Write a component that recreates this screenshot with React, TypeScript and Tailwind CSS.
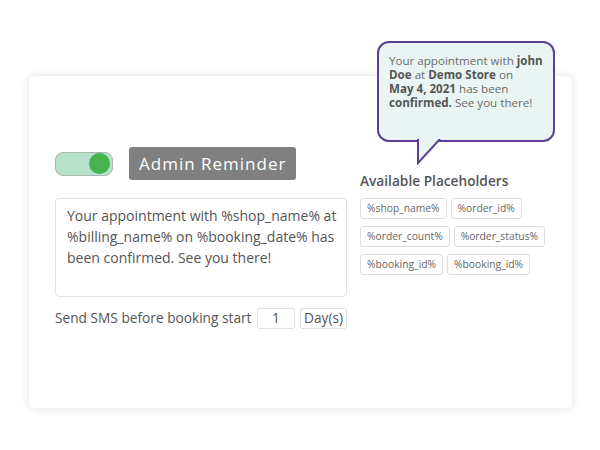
import React from 'react';

const chipRows = [
  ['%shop_name%', '%order_id%'],
  ['%order_count%', '%order_status%'],
  ['%booking_id%', '%booking_id%'],
];

function Toggle() {
  return (
    <div className="flex items-center justify-end w-[58px] h-[24px] rounded-[8px] border border-[#a9b5ae] bg-[#b7e3cc] pr-[2px]">
      <div className="w-[21px] h-[21px] rounded-full bg-[#46b350]" />
    </div>
  );
}

function Bubble() {
  return (
    <div className="absolute left-[348px] top-[-35px] w-[178px] h-[101px]">
      <div className="w-full h-full rounded-[12px] border-2 border-[#5c3f93] bg-[#eaf5f3] pl-[10px] pt-[11px] text-[11.6px] leading-[14px] text-[#6b6b6b] whitespace-nowrap">
        Your appointment with <b className="font-bold text-[#555]">john</b>
        <br />
        <b className="font-bold text-[#555]">Doe</b> at <b className="font-bold text-[#555]">Demo Store</b> on
        <br />
        <b className="font-bold text-[#555]">May 4, 2021</b> has been
        <br />
        <b className="font-bold text-[#555]">confirmed.</b> See you there!
      </div>
      <svg className="absolute left-[39px] top-[98px]" width="26" height="26" viewBox="0 0 26 26">
        <path d="M2 0 L2 24 L24 0" fill="#eaf5f3" stroke="#5c3f93" strokeWidth="2" strokeLinejoin="miter" />
      </svg>
    </div>
  );
}

export default function App() {
  return (
    <div className="w-[600px] h-[450px] bg-white" style={{ fontFamily: '"Open Sans", sans-serif' }}>
      <div className="pt-[76px] pl-[29px]">
        <div className="relative w-[543px] h-[332px] rounded-[5px] bg-white shadow-[0_0_10px_rgba(0,0,0,0.12)] pl-[26px] pt-[71px] flex gap-[13px]">
          <Bubble />
          <div className="w-[292px] flex flex-col">
            <div className="flex items-center gap-[16px] h-[33px]">
              <Toggle />
              <div className="h-[33px] px-[10px] flex items-center rounded-[3px] bg-[#808080] text-white text-[17px] tracking-[1px]">
                Admin Reminder
              </div>
            </div>
            <div className="mt-[18px] h-[99px] rounded-[4px] border border-[#e2e2e2] px-[11px] pt-[6px] text-[14px] leading-[21px] text-[#555] whitespace-nowrap">
              Your appointment with %shop_name% at
              <br />
              %billing_name% on %booking_date% has
              <br />
              been confirmed. See you there!
            </div>
            <div className="mt-[11px] flex items-center text-[13.7px] text-[#555]">
              <span className="w-[202px] whitespace-nowrap">Send SMS before booking start</span>
              <div className="w-[38px] h-[21px] rounded-[3px] border border-[#e0e0e0] flex items-center justify-center">1</div>
              <div className="ml-[5px] w-[47px] h-[21px] rounded-[3px] border border-[#e0e0e0] flex items-center justify-center">Day(s)</div>
            </div>
          </div>
          <div className="flex flex-col pt-[24px]">
            <div className="text-[13.7px] leading-[20px] font-semibold text-[#555] whitespace-nowrap">Available Placeholders</div>
            <div className="mt-[7px] flex flex-col gap-[7px]">
              {chipRows.map((row, i) => (
                <div key={i} className="flex gap-[4px]">
                  {row.map((c, j) => (
                    <div
                      key={j}
                      className="h-[21px] px-[6px] flex items-center rounded-[3px] border border-[#dedede] text-[10.3px] text-[#666] whitespace-nowrap"
                    >
                      {c}
                    </div>
                  ))}
                </div>
              ))}
            </div>
          </div>
        </div>
      </div>
    </div>
  );
}
